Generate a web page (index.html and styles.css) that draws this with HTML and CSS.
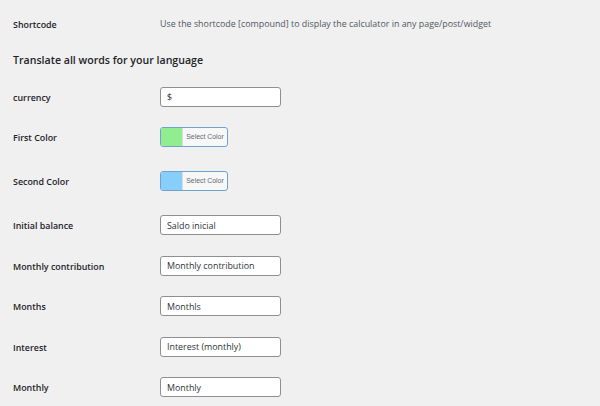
FILE: index.html
```html
<!DOCTYPE html>
<html lang="en">
<head>
  <meta charset="UTF-8">
  <meta name="viewport" content="width=device-width, initial-scale=1.0">
  <title>Compound Calculator Settings</title>
  <link rel="stylesheet" href="styles.css">
</head>
<body>
  <div class="wrap">
    <div class="row shortcode">
      <div class="label">Shortcode</div>
      <div class="desc">Use the shortcode [compound] to display the calculator in any page/post/widget</div>
    </div>

    <h2 class="title">Translate all words for your language</h2>

    <div class="row">
      <div class="label">currency</div>
      <input class="field" type="text" value="$">
    </div>
    <div class="row color-row">
      <div class="label">First Color</div>
      <button class="color-result">
        <span class="swatch green"></span>
        <span class="color-text">Select Color</span>
      </button>
    </div>
    <div class="row color-row">
      <div class="label">Second Color</div>
      <button class="color-result">
        <span class="swatch blue"></span>
        <span class="color-text">Select Color</span>
      </button>
    </div>
    <div class="row">
      <div class="label">Initial balance</div>
      <input class="field" type="text" value="Saldo inicial">
    </div>
    <div class="row">
      <div class="label">Monthly contribution</div>
      <input class="field" type="text" value="Monthly contribution">
    </div>
    <div class="row">
      <div class="label">Months</div>
      <input class="field" type="text" value="Monthls">
    </div>
    <div class="row">
      <div class="label">Interest</div>
      <input class="field" type="text" value="Interest (monthly)">
    </div>
    <div class="row">
      <div class="label">Monthly</div>
      <input class="field" type="text" value="Monthly">
    </div>
  </div>
</body>
</html>
```

FILE: styles.css
```css
body {
  margin: 0;
  background-color: #f0f0f1;
  color: #1d2327;
  font-family: "Open Sans", "Noto Sans", sans-serif;
  font-size: 9px;
}

.wrap {
  padding: 0 13px;
}

.row {
  display: flex;
  align-items: center;
  padding: 10px 0 10.5px;
}

.color-row {
  padding: 10px 0 14px;
}

.shortcode {
  padding: 14px 0 0;
}

.label {
  width: 147px;
  flex-shrink: 0;
  padding-top: 2px;
  font-weight: 600;
  font-size: 8.9px;
  line-height: 18px;
}

.desc {
  color: #50575e;
  font-size: 8.9px;
  line-height: 18px;
}

.title {
  margin: 0;
  padding: 17px 0 7.5px;
  font-size: 10.6px;
  line-height: 18px;
  font-weight: 600;
}

.field {
  box-sizing: border-box;
  width: 121px;
  height: 20px;
  margin: 0;
  padding: 0 6px;
  border: 1px solid #8c8f94;
  border-radius: 3px;
  background: #fff;
  color: #2c3338;
  font-family: inherit;
  font-size: 8.9px;
}

.color-result {
  display: flex;
  box-sizing: border-box;
  width: 68px;
  height: 20px;
  margin: 0;
  padding: 0;
  border: 1px solid #6fa3cf;
  border-radius: 3px;
  overflow: hidden;
  background: #f6f7f7;
  cursor: pointer;
}

.swatch {
  width: 21px;
  height: 100%;
}

.green {
  background-color: #90ee90;
}

.blue {
  background-color: #87cefa;
}

.color-text {
  flex: 1;
  height: 100%;
  border-left: 1px solid #dcdcde;
  color: #646970;
  font-family: inherit;
  font-size: 6.9px;
  line-height: 18px;
  text-align: center;
}
```
